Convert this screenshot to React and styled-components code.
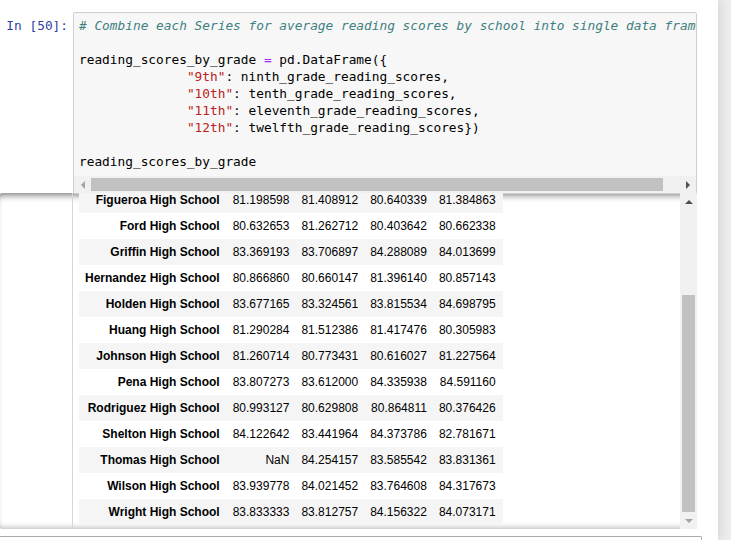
import React from "react";
import styled, { createGlobalStyle, css } from "styled-components";

const GlobalStyle = createGlobalStyle`
  html, body {
    margin: 0;
    padding: 0;
    background: #eeeeee;
  }
  body {
    font-family: "Liberation Sans", Arial, sans-serif;
  }
`;

const codeLines = [
  [{ t: "# Combine each Series for average reading scores by school into single data frame", k: "comment" }],
  [],
  [
    { t: "reading_scores_by_grade " },
    { t: "=", k: "op" },
    { t: " pd.DataFrame({" },
  ],
  [{ t: "              " }, { t: '"9th"', k: "str" }, { t: ": ninth_grade_reading_scores," }],
  [{ t: "              " }, { t: '"10th"', k: "str" }, { t: ": tenth_grade_reading_scores," }],
  [{ t: "              " }, { t: '"11th"', k: "str" }, { t: ": eleventh_grade_reading_scores," }],
  [{ t: "              " }, { t: '"12th"', k: "str" }, { t: ": twelfth_grade_reading_scores})" }],
  [],
  [{ t: "reading_scores_by_grade" }],
];

const rows = [
  ["Figueroa High School", "81.198598", "81.408912", "80.640339", "81.384863"],
  ["Ford High School", "80.632653", "81.262712", "80.403642", "80.662338"],
  ["Griffin High School", "83.369193", "83.706897", "84.288089", "84.013699"],
  ["Hernandez High School", "80.866860", "80.660147", "81.396140", "80.857143"],
  ["Holden High School", "83.677165", "83.324561", "83.815534", "84.698795"],
  ["Huang High School", "81.290284", "81.512386", "81.417476", "80.305983"],
  ["Johnson High School", "81.260714", "80.773431", "80.616027", "81.227564"],
  ["Pena High School", "83.807273", "83.612000", "84.335938", "84.591160"],
  ["Rodriguez High School", "80.993127", "80.629808", "80.864811", "80.376426"],
  ["Shelton High School", "84.122642", "83.441964", "84.373786", "82.781671"],
  ["Thomas High School", "NaN", "84.254157", "83.585542", "83.831361"],
  ["Wilson High School", "83.939778", "84.021452", "83.764608", "84.317673"],
  ["Wright High School", "83.833333", "83.812757", "84.156322", "84.073171"],
];

export default function App() {
  return (
    <>
      <GlobalStyle />
      <Notebook>
        <InputCell>
          <Prompt>In [50]:</Prompt>
          <InputArea>
            <Code>
              {codeLines.map((line, i) => (
                <Line key={i}>
                  {line.length === 0
                    ? " "
                    : line.map((tok, j) => (
                        <Token key={j} $kind={tok.k}>
                          {tok.t}
                        </Token>
                      ))}
                </Line>
              ))}
            </Code>
            <HScrollbar>
              <ArrowButton>
                <Arrow $dir="left" $dim />
              </ArrowButton>
              <HTrack>
                <HThumb $size={572} />
              </HTrack>
              <ArrowButton>
                <Arrow $dir="right" />
              </ArrowButton>
            </HScrollbar>
          </InputArea>
        </InputCell>

        <OutputScroll>
          <OutputPrompt />
          <OutputSubarea>
            <DataFrame>
              <tbody>
                {rows.map((r) => (
                  <Row key={r[0]}>
                    <IndexCell>{r[0]}</IndexCell>
                    {r.slice(1).map((v, i) => (
                      <ValueCell key={i}>{v}</ValueCell>
                    ))}
                  </Row>
                ))}
              </tbody>
            </DataFrame>
          </OutputSubarea>
          <VScrollbar>
            <ArrowButton>
              <Arrow $dir="up" />
            </ArrowButton>
            <VTrack>
              <VThumb $size={217} />
            </VTrack>
            <ArrowButton>
              <Arrow $dir="down" $dim />
            </ArrowButton>
          </VScrollbar>
        </OutputScroll>

        <NextCell />
      </Notebook>
    </>
  );
}

const Notebook = styled.div`
  width: 718px;
  height: 540px;
  background: #ffffff;
  box-shadow: 0 0 12px 1px rgba(87, 87, 87, 0.2);
  overflow: hidden;
  padding-top: 12px;
  box-sizing: border-box;
`;

const mono = css`
  font-family: "DejaVu Sans Mono", "Liberation Mono", monospace;
  font-size: 12.8px;
  line-height: 17px;
`;

const InputCell = styled.div`
  display: flex;
  align-items: flex-start;
`;

const Prompt = styled.div`
  ${mono};
  width: 73px;
  flex: none;
  box-sizing: border-box;
  padding: 5px 5px 0 0;
  text-align: right;
  color: #303f9f;
  white-space: nowrap;
`;

const InputArea = styled.div`
  width: 624px;
  flex: none;
  box-sizing: border-box;
  border: 1px solid #cfcfcf;
  border-radius: 2px;
  background: #f7f7f7;
  overflow: hidden;
`;

const Code = styled.div`
  ${mono};
  padding: 4px 0 6px 5px;
  white-space: pre;
  overflow: hidden;
  color: #000000;
`;

const Line = styled.div`
  height: 17px;
`;

const tokenColors = {
  comment: "#408080",
  str: "#ba2121",
  op: "#aa22ff",
};

const Token = styled.span`
  color: ${(p) => tokenColors[p.$kind] || "#000000"};
  font-style: ${(p) => (p.$kind === "comment" ? "italic" : "normal")};
`;

const HScrollbar = styled.div`
  display: flex;
  height: 17px;
  background: #f1f1f1;
`;

const ArrowButton = styled.div`
  width: 17px;
  height: 17px;
  flex: none;
  display: flex;
  align-items: center;
  justify-content: center;
`;

const HTrack = styled.div`
  flex: 1;
  display: flex;
  align-items: center;
`;

const HThumb = styled.div`
  width: ${(p) => p.$size}px;
  height: 13px;
  background: #c1c1c1;
`;

const arrowShapes = {
  left: css`
    border-top: 4px solid transparent;
    border-bottom: 4px solid transparent;
    border-right: 4px solid currentColor;
  `,
  right: css`
    border-top: 4px solid transparent;
    border-bottom: 4px solid transparent;
    border-left: 4px solid currentColor;
  `,
  up: css`
    border-left: 4px solid transparent;
    border-right: 4px solid transparent;
    border-bottom: 4px solid currentColor;
  `,
  down: css`
    border-left: 4px solid transparent;
    border-right: 4px solid transparent;
    border-top: 4px solid currentColor;
  `,
};

const Arrow = styled.span`
  width: 0;
  height: 0;
  color: ${(p) => (p.$dim ? "#a3a3a3" : "#505050")};
  ${(p) => arrowShapes[p.$dir]};
`;

const OutputScroll = styled.div`
  display: flex;
  width: 697px;
  height: 336px;
  margin-top: -1px;
  overflow: hidden;
  border-radius: 2px;
  box-shadow: inset 0 7px 7px -5px rgba(0, 0, 0, 0.55),
    inset 0 -6px 6px -5px rgba(0, 0, 0, 0.3);
`;

const OutputPrompt = styled.div`
  width: 72px;
  flex: none;
  border-right: 1px solid #d6d6d6;
`;

const OutputSubarea = styled.div`
  flex: 1;
  padding-left: 6px;
  overflow: hidden;
`;

const DataFrame = styled.table`
  border-collapse: collapse;
  border-spacing: 0;
  margin-top: -6px;
  font-family: "Liberation Sans", Arial, sans-serif;
  font-size: 12px;
  color: #000000;
`;

const Row = styled.tr`
  &:nth-child(odd) {
    background: #f5f5f5;
  }
  &:nth-child(even) {
    background: #ffffff;
  }
`;

const cell = css`
  padding: 6px 6px;
  line-height: 14px;
  text-align: right;
  white-space: nowrap;
  vertical-align: middle;
`;

const IndexCell = styled.th`
  ${cell};
  font-weight: bold;
  padding-right: 7px;
`;

const ValueCell = styled.td`
  ${cell};
  &:last-child {
    padding-right: 7px;
  }
`;

const VScrollbar = styled.div`
  width: 17px;
  flex: none;
  display: flex;
  flex-direction: column;
  background: #f1f1f1;
`;

const VTrack = styled.div`
  flex: 1;
  display: flex;
  flex-direction: column;
  justify-content: flex-end;
  align-items: center;
`;

const VThumb = styled.div`
  width: 13px;
  height: ${(p) => p.$size}px;
  background: #c1c1c1;
`;

const NextCell = styled.div`
  width: 702px;
  height: 20px;
  margin-top: 7px;
  box-sizing: border-box;
  border-top: 1px solid #ababab;
  border-right: 1px solid #ababab;
  border-top-right-radius: 2px;
`;
